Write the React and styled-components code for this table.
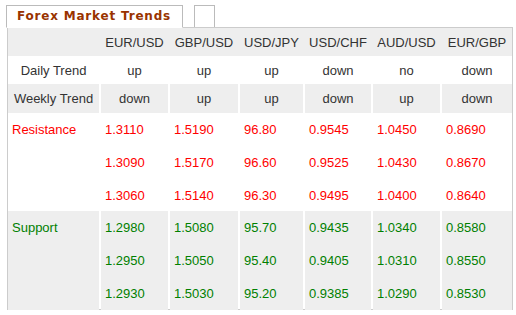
import React from 'react';
import styled, { createGlobalStyle } from 'styled-components';

const GlobalStyle = createGlobalStyle`
  body {
    margin: 0;
    background: #fff;
    font-family: "Liberation Sans", Arial, sans-serif;
  }
`;

const pairs = ['EUR/USD', 'GBP/USD', 'USD/JPY', 'USD/CHF', 'AUD/USD', 'EUR/GBP'];
const daily = ['up', 'up', 'up', 'down', 'no', 'down'];
const weekly = ['down', 'up', 'up', 'down', 'up', 'down'];
const resistance = [
    ['1.3110', '1.3090', '1.3060'],
    ['1.5190', '1.5170', '1.5140'],
    ['96.80', '96.60', '96.30'],
    ['0.9545', '0.9525', '0.9495'],
    ['1.0450', '1.0430', '1.0400'],
    ['0.8690', '0.8670', '0.8640'],
];
const support = [
    ['1.2980', '1.2950', '1.2930'],
    ['1.5080', '1.5050', '1.5030'],
    ['95.70', '95.40', '95.20'],
    ['0.9435', '0.9405', '0.9385'],
    ['1.0340', '1.0310', '1.0290'],
    ['0.8580', '0.8550', '0.8530'],
];

const Wrapper = styled.div`
    padding: 5px 0 0 6px;
    width: 507px;
`;

const TabBar = styled.div`
    display: flex;
    align-items: flex-start;
    height: 22px;
`;

const Tab = styled.div`
    position: relative;
    z-index: 1;
    box-sizing: border-box;
    height: ${p => p.$active ? '23px' : '22px'};
    width: ${p => p.$active ? '177px' : '21px'};
    margin-left: ${p => p.$active ? '0' : '11px'};
    border: 1px solid #bbb;
    border-bottom: ${p => p.$active ? '1px solid #fff' : 'none'};
    background: #fff;
    padding-left: 10px;
    font-family: "DejaVu Sans", Verdana, sans-serif;
    font-weight: bold;
    font-size: 12px;
    line-height: 21px;
    color: #993300;
    letter-spacing: 0.8px;
    white-space: nowrap;
`;

const Table = styled.div`
    margin-left: 1px;
    border: 1px solid #ccc;
    font-size: 13px;
    color: #333;
`;

const Row = styled.div`
    display: grid;
    grid-template-columns: 91px 67px 68px 63px 66px 67px 70px;
    column-gap: 2px;
    height: ${p => p.$h}px;
    background: ${p => p.$shade ? '#eee' : 'transparent'};
`;

const Cell = styled.div`
    display: flex;
    align-items: center;
    justify-content: center;
    background: ${p => p.$shade ? '#eee' : 'transparent'};
`;

const Block = styled.div`
    padding-left: 4px;
    line-height: 33px;
    color: ${p => p.$color};
    background: ${p => p.$shade ? '#eee' : 'transparent'};
`;

const Line = styled.div``;

function LevelRow({ label, values, color, shade }) {
    return (
        <Row $h={98}>
            <Block $color={color} $shade={shade}>{label}</Block>
            {values.map((col, i) => (
                <Block key={i} $color={color} $shade={shade}>
                    {col.map(v => <Line key={v}>{v}</Line>)}
                </Block>
            ))}
        </Row>
    );
}

export default function App() {
    return (
        <Wrapper>
            <GlobalStyle />
            <TabBar>
                <Tab $active>Forex Market Trends</Tab>
                <Tab />
            </TabBar>
            <Table>
                <Row $h={28} $shade>
                    <Cell />
                    {pairs.map(p => <Cell key={p}>{p}</Cell>)}
                </Row>
                <Row $h={28}>
                    <Cell>Daily Trend</Cell>
                    {daily.map((d, i) => <Cell key={i}>{d}</Cell>)}
                </Row>
                <Row $h={29}>
                    <Cell $shade>Weekly Trend</Cell>
                    {weekly.map((w, i) => <Cell key={i} $shade>{w}</Cell>)}
                </Row>
                <LevelRow label="Resistance" values={resistance} color="#ff0000" />
                <LevelRow label="Support" values={support} color="#008000" shade />
            </Table>
        </Wrapper>
    );
}
